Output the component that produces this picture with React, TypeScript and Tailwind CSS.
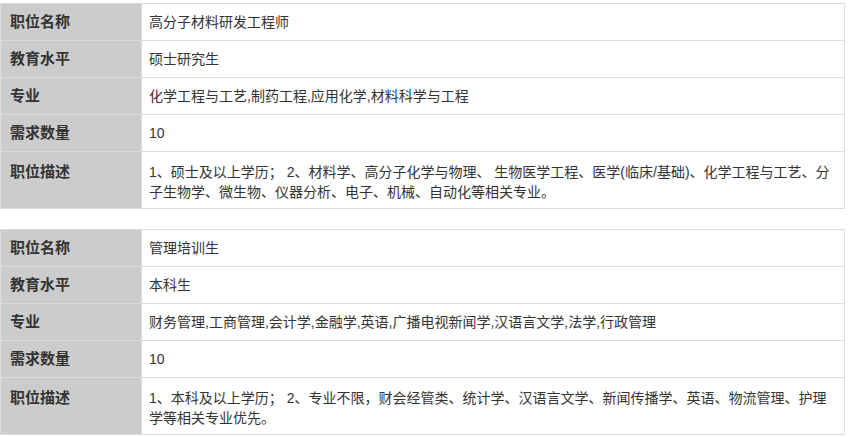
import React from 'react';

type Row = { label: string; value: React.ReactNode; tall?: boolean };

const jobs: Row[][] = [
  [
    { label: '职位名称', value: '高分子材料研发工程师' },
    { label: '教育水平', value: '硕士研究生' },
    { label: '专业', value: '化学工程与工艺,制药工程,应用化学,材料科学与工程' },
    { label: '需求数量', value: '10' },
    {
      label: '职位描述',
      tall: true,
      value: (
        <>
          1、硕士及以上学历； 2、材料学、高分子化学与物理、 生物医学工程、医学(临床/基础)、化学工程与工艺、分
          <br />
          子生物学、微生物、仪器分析、电子、机械、自动化等相关专业。
        </>
      ),
    },
  ],
  [
    { label: '职位名称', value: '管理培训生' },
    { label: '教育水平', value: '本科生' },
    { label: '专业', value: '财务管理,工商管理,会计学,金融学,英语,广播电视新闻学,汉语言文学,法学,行政管理' },
    { label: '需求数量', value: '10' },
    {
      label: '职位描述',
      tall: true,
      value: (
        <>
          1、本科及以上学历； 2、专业不限，财会经管类、统计学、汉语言文学、新闻传播学、英语、物流管理、护理
          <br />
          学等相关专业优先。
        </>
      ),
    },
  ],
];

function JobTable({ rows }: { rows: Row[] }) {
  return (
    <table className="w-[845px] border-collapse border border-[#dcdcdc]">
      <tbody>
        {rows.map((r) => (
          <tr key={r.label} className="border-b border-[#dcdcdc]">
            <td
              className={`w-[141px] bg-[#cccccc] pl-[9px] align-top text-[15px] font-bold leading-[20px] text-[#333] border-r border-[#dcdcdc] ${
                r.tall ? 'pt-[10px] h-[57px]' : 'pt-[8px] h-[37px]'
              }`}
            >
              {r.label}
            </td>
            <td
              className={`bg-white pl-[7px] pr-[7px] align-top text-[14px] leading-[20px] text-[#333] whitespace-nowrap ${
                r.tall ? 'pt-[10px]' : 'pt-[8px]'
              }`}
            >
              {r.value}
            </td>
          </tr>
        ))}
      </tbody>
    </table>
  );
}

export default function App() {
  return (
    <div
      className="w-[850px] h-[437px] bg-white pt-[3px] overflow-hidden"
      style={{ fontFamily: '"Liberation Sans", "Noto Sans CJK SC", sans-serif' }}
    >
      <div className="flex flex-col gap-[20px]">
        {jobs.map((rows, i) => (
          <JobTable key={i} rows={rows} />
        ))}
      </div>
    </div>
  );
}
